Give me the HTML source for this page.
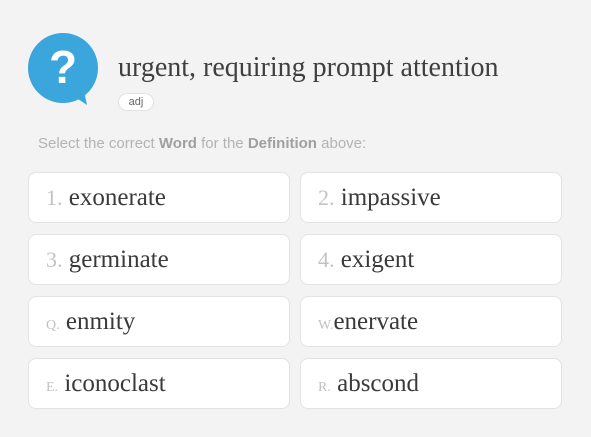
<!DOCTYPE html>
<html><head><style>
body{margin:0;width:591px;height:437px;background:#f3f3f3;font-family:"Liberation Sans",sans-serif;position:relative;overflow:hidden}
.t{position:absolute;left:118px;top:52px;font:28px "Liberation Serif",serif;color:#3f3f3f}
.adj{position:absolute;left:118px;top:93px;width:34px;height:16px;border:1px solid #e2e2e2;border-radius:9px;background:#fff;font-size:11px;color:#666;text-align:center;line-height:16px}
.ins{position:absolute;left:38px;top:135px;font-size:15px;color:#b3b3b3}
.ins b{color:#a0a0a0}
.b{position:absolute;width:260px;height:49px;background:#fff;border:1px solid #e3e3e3;border-radius:8px;font:25px "Liberation Serif",serif;color:#3a3a3a;line-height:49px;box-sizing:content-box}
.b span{color:#c2c2c2;font-size:22px;margin-left:17px}
.b span.s{font-size:14px}
</style></head><body>
<svg style="position:absolute;left:26px;top:32px" width="76" height="76" viewBox="0 0 76 76">
<circle cx="37" cy="36" r="35" fill="#3aa6dc"/>
<path d="M61 73 L57 54 L46 63 Z" fill="#3aa6dc"/>
<text x="37" y="51" text-anchor="middle" font-family="Liberation Sans" font-weight="bold" font-size="46" fill="#fff">?</text>
</svg>
<div class="t">urgent, requiring prompt attention</div>
<div class="adj">adj</div>
<div class="ins">Select the correct <b>Word</b> for the <b>Definition</b> above:</div>
<div class="b" style="left:28px;top:172px"><span>1.</span> exonerate</div>
<div class="b" style="left:300px;top:172px"><span>2.</span> impassive</div>
<div class="b" style="left:28px;top:234px"><span>3.</span> germinate</div>
<div class="b" style="left:300px;top:234px"><span>4.</span> exigent</div>
<div class="b" style="left:28px;top:296px"><span class="s">Q.</span> enmity</div>
<div class="b" style="left:300px;top:296px"><span class="s">W.</span>enervate</div>
<div class="b" style="left:28px;top:358px"><span class="s">E.</span> iconoclast</div>
<div class="b" style="left:300px;top:358px"><span class="s">R.</span> abscond</div>
</body></html>
